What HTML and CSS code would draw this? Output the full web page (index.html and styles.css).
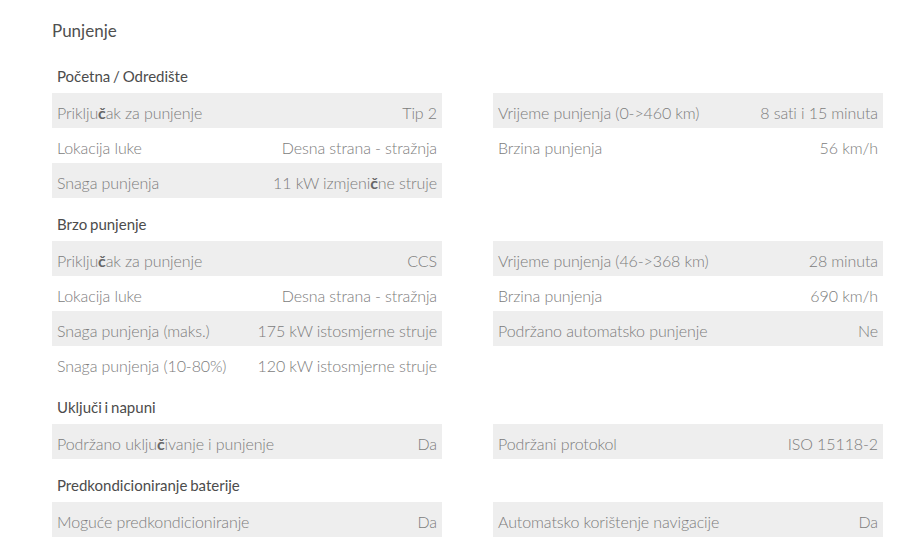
FILE: index.html
```html
<!DOCTYPE html>
<html lang="hr">
<head>
<meta charset="utf-8">
<title>Punjenje</title>
<link rel="stylesheet" href="styles.css">
</head>
<body>
<div class="page">
  <h2 class="title">Punjenje</h2>

  <section class="group">
    <h3 class="group-title">Početna / Odredište</h3>
    <div class="cols">
      <div class="col">
        <div class="row"><span>Priklju<b class="fb">č</b>ak za punjenje</span><span>Tip 2</span></div>
        <div class="row"><span>Lokacija luke</span><span>Desna strana - stražnja</span></div>
        <div class="row"><span>Snaga punjenja</span><span>11 kW izmjeni<b class="fb">č</b>ne struje</span></div>
      </div>
      <div class="col">
        <div class="row"><span>Vrijeme punjenja (0-&gt;460 km)</span><span>8 sati i 15 minuta</span></div>
        <div class="row"><span>Brzina punjenja</span><span>56 km/h</span></div>
      </div>
    </div>
  </section>

  <section class="group">
    <h3 class="group-title">Brzo punjenje</h3>
    <div class="cols">
      <div class="col">
        <div class="row"><span>Priklju<b class="fb">č</b>ak za punjenje</span><span>CCS</span></div>
        <div class="row"><span>Lokacija luke</span><span>Desna strana - stražnja</span></div>
        <div class="row"><span>Snaga punjenja (maks.)</span><span>175 kW istosmjerne struje</span></div>
        <div class="row"><span>Snaga punjenja (10-80%)</span><span>120 kW istosmjerne struje</span></div>
      </div>
      <div class="col">
        <div class="row"><span>Vrijeme punjenja (46-&gt;368 km)</span><span>28 minuta</span></div>
        <div class="row"><span>Brzina punjenja</span><span>690 km/h</span></div>
        <div class="row"><span>Podržano automatsko punjenje</span><span>Ne</span></div>
      </div>
    </div>
  </section>

  <section class="group">
    <h3 class="group-title">Uključi i napuni</h3>
    <div class="cols">
      <div class="col">
        <div class="row"><span>Podržano uklju<b class="fb">č</b>ivanje i punjenje</span><span>Da</span></div>
      </div>
      <div class="col">
        <div class="row"><span>Podržani protokol</span><span>ISO 15118-2</span></div>
      </div>
    </div>
  </section>

  <section class="group">
    <h3 class="group-title">Predkondicioniranje baterije</h3>
    <div class="cols">
      <div class="col">
        <div class="row"><span>Moguće predkondicioniranje</span><span>Da</span></div>
      </div>
      <div class="col">
        <div class="row"><span>Automatsko korištenje navigacije</span><span>Da</span></div>
      </div>
    </div>
  </section>
</div>
</body>
</html>
```

FILE: styles.css
```css
html, body {
  margin: 0;
  padding: 0;
  background: #ffffff;
}

body {
  font-family: Lato, "Open Sans", sans-serif;
  color: #555;
}

.page {
  width: 831px;
  padding: 0 0 0 52px;
}

.title {
  margin: 0;
  height: 50px;
  display: flex;
  align-items: center;
  padding-top: 10px;
  box-sizing: border-box;
  font-size: 17px;
  font-weight: 400;
  color: #505050;
}

.group-title {
  margin: 0;
  height: 43px;
  display: flex;
  align-items: center;
  padding: 9px 5px 0;
  box-sizing: border-box;
  font-size: 15px;
  font-weight: 400;
  color: #4c4c4c;
  word-spacing: -1px;
}

.cols {
  display: grid;
  grid-template-columns: 390px 390px;
  column-gap: 51px;
}

.row {
  height: 35px;
  display: flex;
  align-items: center;
  justify-content: space-between;
  padding: 3px 5px 0;
  box-sizing: border-box;
  font-size: 16px;
  font-weight: 300;
  color: #7c7c7c;
  letter-spacing: -0.1px;
}

.row:nth-child(odd) {
  background: #eeeeee;
}

.fb {
  font-weight: 700;
  color: #666;
}
```
